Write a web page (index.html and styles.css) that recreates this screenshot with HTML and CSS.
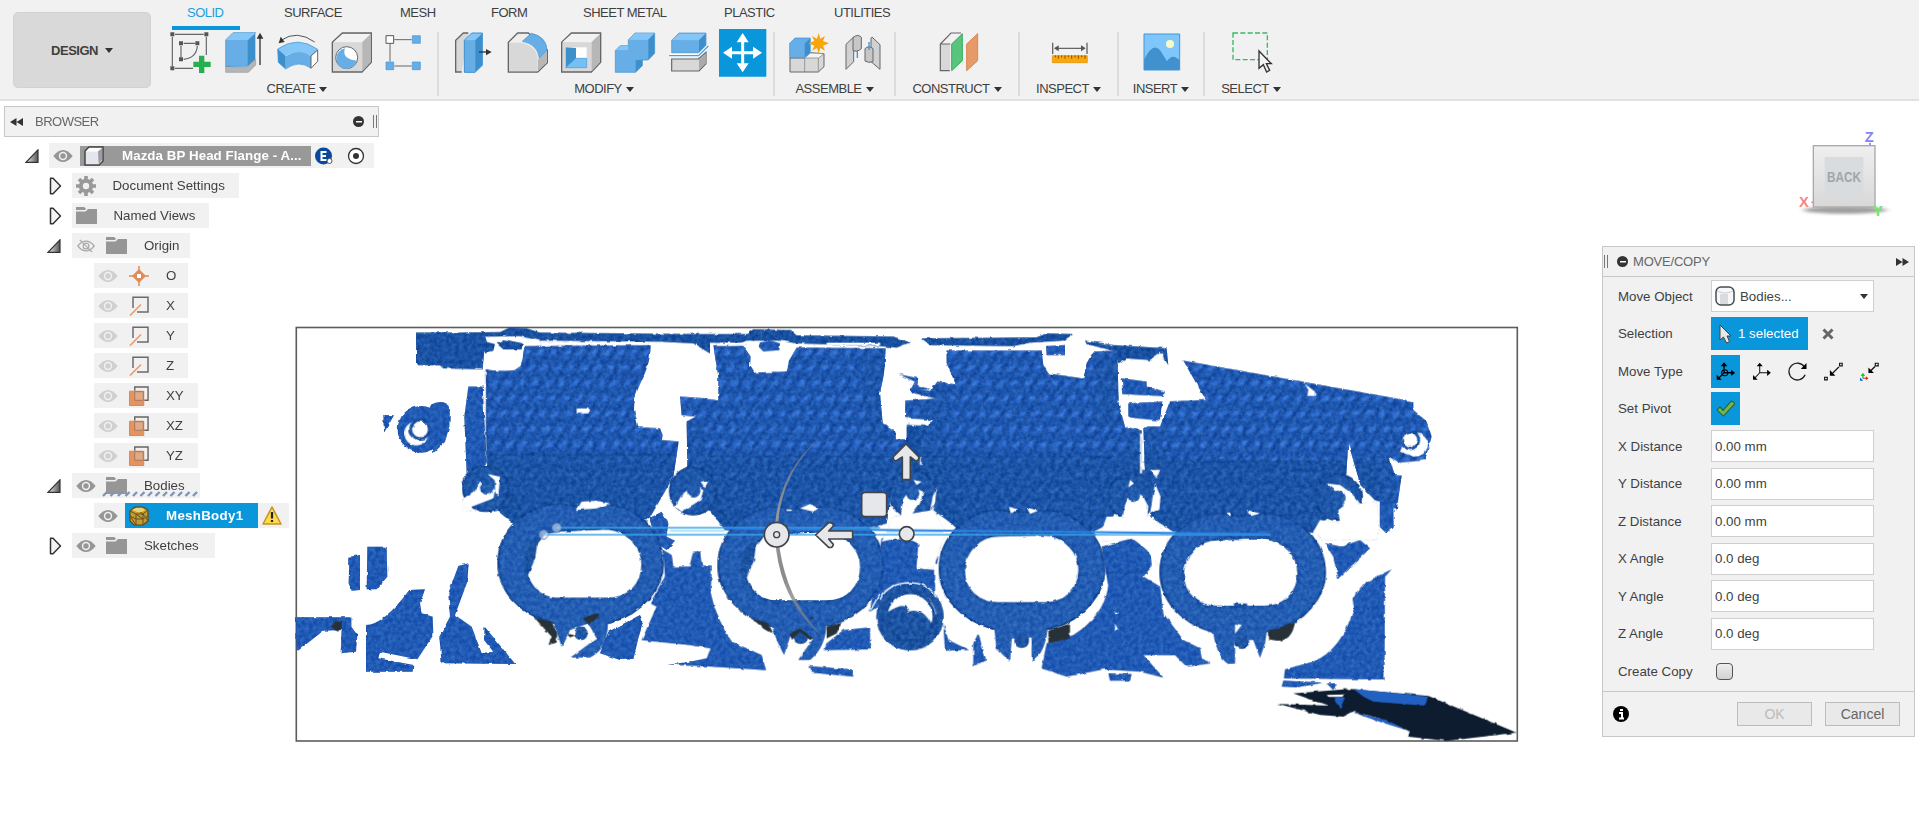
FILE: index.html
```html
<!DOCTYPE html>
<html lang="en">
<head>
<meta charset="utf-8">
<title>Mazda BP Head Flange</title>
<link rel="stylesheet" href="styles.css">
</head>
<body>
<svg class="defs" width="0" height="0">
  <defs>
    <linearGradient id="arrowFill" x1="0" x2="1"><stop offset="0" stop-color="#eee"/><stop offset="1" stop-color="#555"/></linearGradient>
    <symbol id="open" viewBox="0 0 14 14"><path d="M13 .8V13.300H1Z" fill="url(#arrowFill)" stroke="#333" stroke-width="1.200"/></symbol>
    <symbol id="closed" viewBox="0 0 13 18"><path d="M1.500 1.200H4L11.500 9 4 16.800H1.500Z" fill="#f4f4f4" stroke="#333" stroke-width="1.500" stroke-linejoin="round"/></symbol>
    <symbol id="eye" viewBox="0 0 20 14"><path d="M.3 7Q5 1 10 1t9.700 6Q15 13 10 13T.3 7Z" fill="currentColor"/><circle cx="10" cy="7" r="4.200" fill="#f1f1f1"/><circle cx="10" cy="7" r="2.700" fill="currentColor"/></symbol>
    <symbol id="eyeoff" viewBox="0 0 20 16"><path d="M.7 8Q5 2.500 10 2.500T19.300 8Q15 13.500 10 13.500T.7 8ZM3 1l14 14" fill="none" stroke="#aaa" stroke-width="1.400"/><circle cx="10" cy="8" r="3.300" fill="none" stroke="#aaa" stroke-width="1.400"/></symbol>
    <symbol id="folder" viewBox="0 0 21 17"><path d="M0 0H8L10 1.500 9 3H0ZM0 4.500H9.500L12 2H21V17H0Z" fill="#969696"/></symbol>
    <symbol id="axis" viewBox="0 0 20 20"><path d="M4 12V1.200H19V16H8" fill="none" stroke="#6b6b6b" stroke-width="1.500"/><path d="M1 19.500L12 8.500" stroke="#e9a071" stroke-width="1.700"/></symbol>
    <symbol id="plane" viewBox="0 0 21 21"><path d="M6 5V1H20V15H16" fill="none" stroke="#666" stroke-width="1.500"/><path d="M.5 5.500H15.500V20.500H.5Z" fill="#e4945f" stroke="#d98550"/><path d="M6 6H15V15H6Z" fill="#dfab87" stroke="#a87558"/></symbol>
  </defs>
</svg>

<svg class="viewport" width="1919" height="836" viewBox="0 0 1919 836">
  <defs>
    <filter id="scan" x="-2%" y="-3%" width="104%" height="106%" color-interpolation-filters="sRGB">
      <feTurbulence type="fractalNoise" baseFrequency=".05" numOctaves="2" seed="4" result="edge"/>
      <feDisplacementMap in="SourceGraphic" in2="edge" scale="9" xChannelSelector="R" yChannelSelector="G" result="rough"/>
      <feTurbulence type="fractalNoise" baseFrequency=".08" numOctaves="3" seed="9"/>
      <feColorMatrix values="0 0 0 0 .2  0 0 0 0 .29  0 0 0 0 .42  1.100 0 0 0 -.3"/>
      <feComposite in2="rough" operator="in" result="grain"/>
      <feBlend in="grain" in2="rough" mode="screen"/>
    </filter>
    <filter id="ragged" x="-2%" y="-3%" width="104%" height="106%">
      <feTurbulence type="fractalNoise" baseFrequency=".05" numOctaves="2" seed="4"/>
      <feDisplacementMap in="SourceGraphic" scale="9" xChannelSelector="R" yChannelSelector="G"/>
    </filter>
    <pattern id="weave" width="40" height="46" patternUnits="userSpaceOnUse" patternTransform="skewX(-32)">
      <path d="M0 0V46M40 0V46" stroke="#063079" stroke-width="11" opacity=".36"/>
      <path d="M0 4L40 24" stroke="#063079" stroke-width="6" opacity=".2"/>
      <ellipse cx="21" cy="36" rx="11" ry="11" fill="#3f80f0" opacity=".26"/>
      <ellipse cx="22" cy="34" rx="6" ry="7" fill="#4a8bfa" opacity=".28"/>
    </pattern>
    <linearGradient id="needle" x1="0" y1="0" x2="0" y2="1"><stop offset="0" stop-color="#888" stop-opacity=".4"/><stop offset=".4" stop-color="#999"/><stop offset=".7" stop-color="#8a8a8a"/><stop offset="1" stop-color="#888" stop-opacity=".4"/></linearGradient>
    <linearGradient id="cube" x1="0" y1="0" x2="0" y2="1"><stop offset="0" stop-color="#efefef"/><stop offset="1" stop-color="#d8d8d8"/></linearGradient>
    <filter id="soft" x="-20%" y="-100%" width="140%" height="300%"><feGaussianBlur stdDeviation="9 4"/></filter>
    <path id="flange" d="M-247 0C-247-90-170-176-60-176Q0-160 60-176C170-176 247-90 247 5C247 70 190 150 90 180H-90C-190 150-247 80-247 0Z"/>
    <path id="bore" d="M-172 5C-172-58-120-100-70-100L70-103C130-98 172-50 172 0C172 60 130 100 70 100H-70C-130 100-172 60-172 5Z"/>
    <path id="boreCut" d="M-172 32L-150-20-145-60-120-92-70-100L70-106C130-98 172-50 172 0C172 60 130 102 70 102H-85C-130 100-160 70-172 32Z"/>
    <path id="block1" d="M735 108L1112 106C1110 200 1062 220 1062 300L1075 352 1140 355 1148 375 1145 390 1196 395 1180 500 1108 625 1000 650 700 640 655 600 650 500 622 470 616 178Q660 186 705 180 728 170 730 130Z"/>
    <path id="block2" d="M100 108L190 108 212 140 210 165 225 188 320 185 328 150 350 113 617 115 612 190 600 250 608 340 645 362 648 388 680 388 686 322 675 320 676 272 770 266 690 246 690 235 750 243 770 215 828 224 800 160 800 122 1085 122 1090 165 1105 190 1210 206 1220 160 1240 125 1312 122 1316 280 1335 350 1385 362 1385 480 1395 480 1390 350 1440 350 1470 274 1578 270 1510 152 2130 262 2200 275 2200 300 2240 335 2255 380 2235 450 2160 458 2125 440 2145 495 2165 497 2150 600 2138 590 2140 650 2118 668 2100 650 2100 575 2085 570 2042 525 2005 400 1998 500 2045 580 1990 550 1970 600 1925 640 1900 665 1480 665 1410 620 1425 540 1320 570 1290 640 1240 665 830 655 770 590 690 610 720 540 665 560 655 600 630 575 620 640 560 655 135 660 90 600 10 610 60 550 -15 580 -30 540 -10 490 22 470 20 335 48 320 5 315 0 260 75 265 115 272 115 200Z"/>
    <clipPath id="inBlock1"><use href="#block1"/></clipPath>
    <clipPath id="inBlock2"><use href="#block2"/></clipPath>
  </defs>

  <rect x="296.300" y="327.500" width="1221" height="413.500" fill="#fff" stroke="#5c5c5c" stroke-width="1.600"/>

  <g transform="translate(280 310) scale(.33333)" fill="#144dac">
    <g filter="url(#scan)">
      <!-- first cylinder, left edge -->
      <path d="M408 68H612L622 100 612 130 608 178 490 175 480 166 408 165Z" fill="#0e459a"/>
      <path d="M540 68L660 66 690 52 740 55 780 68 1260 72 1400 72 1420 58 1530 60 1550 76 1840 80 1890 97 1850 113 1800 108 1550 100 1500 92 1400 92 1380 100 1290 98 1290 130 1240 100 1140 95 780 92 720 78 620 80Z" fill="#0c4295"/>
      <path d="M1925 85L2270 82 2300 70 2380 72 2350 92 2250 98 2200 108 1950 105ZM2415 92L2500 105 2660 115 2665 165 2640 125 2610 150 2540 145 2515 160 2500 122 2420 102ZM650 100L670 88 728 100 725 118 670 118ZM615 95L645 102 640 122 615 130Z" fill="#0c4295"/>
      <path d="M565 230H608L620 460 560 490 553 320Z"/>
      <use href="#block1"/><use href="#block1" fill="url(#weave)"/>
      <path d="M600 432H1200V660H600Z" fill="#0e4596" opacity=".65" clip-path="url(#inBlock1)"/>
      <path d="M1436 110L1440 98 1470 92 1500 100 1498 120 1450 124Z"/>
      <g transform="translate(1200 0)">
        <use href="#block2"/><use href="#block2" fill="url(#weave)"/>
        <g clip-path="url(#inBlock2)" fill="#0e4596">
          <path d="M60 440H1320L2090 455V670H60Z" opacity=".6"/>
          <path d="M720 120H800V660H720ZM540 120H617V400H560ZM20 340H75V500H20ZM1250 120H1312V350H1250ZM1338 350H1450V500H1338ZM1940 440H2140V660H1940Z" opacity=".4"/>
        </g>
        <path d="M655 192L715 205 712 225 750 238 690 242 705 215ZM1098 108L1155 105 1155 135 1100 135Z"/>
        <path d="M1325 205L1400 215 1400 230 1455 245 1450 258 1330 252ZM1345 280L1447 275 1440 332 1345 322Z"/>
        <path d="M680 345H722V480H680Z" fill="#0c4295"/>
      </g>

      <!-- webs and debris below the ports -->
      <path d="M310 315L342 316 312 368ZM450 285Q490 265 510 290L508 350 495 395 460 430Z"/>
      <circle cx="423" cy="358" r="70"/>
      <path d="M208 740L240 735 240 840 215 842 206 820ZM262 710L320 710 322 800 290 838 260 838Z"/>
      <path d="M48 922H214L214 950 232 975 228 1025 182 1030 185 960 130 962 50 1025Z"/>
      <path d="M388 840L435 838 420 880 425 910 458 920 460 975 412 1048 300 1025 295 1045 400 1065 398 1085H258V945Q310 945 388 840Z"/>
      <path d="M535 768L566 760 562 815 525 915 575 950 605 1030 640 1025 612 990 614 950 706 1062 485 1060 478 980 510 920 505 850Z"/>
      <path d="M1108 625L1145 605 1165 640 1160 680 1185 692 1160 720 1130 700ZM1080 915L1090 935 1075 985 1060 1048 1020 1050 960 1030 985 965ZM1160 1065L1300 1045 1290 1060Z"/>
      <g transform="translate(1200 0)">
        <path d="M-50 720L-25 735-20 770 28 770 40 725 60 725 66 770 95 770 92 850Q110 930 155 995L245 1035 258 1080 70 1068-10 1065 80 1045 92 1015 30 1005-115 990-70 890-90 880-45 800Z"/>
        <path d="M605 685L700 685 720 705 710 775 765 780 765 850 610 880 570 905ZM755 740L775 740 770 765Z"/>
        <path d="M440 1000L490 960 570 952 570 1018 430 1020ZM385 1068L515 1078 520 1100 395 1088ZM790 940L805 990 868 1020 795 1022ZM895 970L918 1050 880 1068 880 1000Z"/>
        <circle cx="690" cy="920" r="101" fill="#114798"/>
      </g>
      <g transform="translate(2400 0)">
        <path d="M-115 1075L-100 1000-20 975Q70 920 85 830L65 710 155 685 210 720 215 770 190 800 240 830 250 910 310 990 360 1015 365 1045 392 1060 320 1070 285 1035H190L250 1103 180 1085 70 1078-40 1100ZM85 1090L155 1092 150 1112 90 1112Z"/>
        <path d="M935 778L915 800 913 1108 612 1105 615 1078 700 1055Q785 1020 822 895L818 865 860 815ZM735 700L785 710 840 690 870 715 775 805 760 740ZM610 1112L730 1118 650 1132 605 1130ZM740 1120H770L760 1140Z"/>
      </g>

      <!-- bolt bosses -->
      <g fill="#124a9f" stroke="#0a3a88" stroke-width="6">
        <circle cx="617" cy="535" r="68"/><circle cx="1240" cy="543" r="70"/><circle cx="1898" cy="552" r="70"/><circle cx="2555" cy="560" r="70"/><circle cx="3175" cy="562" r="68"/>
      </g>
      <g fill="#fff">
        <path d="M550 565L580 545 600 515 645 540 640 565 575 590 575 605 545 600ZM622 492L660 500 655 560 645 545 645 512Z"/>
        <path d="M1185 590L1205 555 1240 525 1270 540 1262 570 1205 605ZM1262 515L1285 512 1275 535Z"/>
        <path d="M1860 640L1868 570 1895 530 1930 545 1920 580 1890 620ZM1900 510L1925 515 1910 525Z"/>
        <path d="M2525 640L2535 585 2555 535 2590 560 2605 590 2600 640ZM2550 510L2562 520 2545 532ZM2610 480L2640 480 2630 505ZM2625 520L2642 560 2638 600 2610 610Z"/>
        <path d="M3175 600L3195 585 3170 545 3140 520 3180 525 3215 550 3240 580 3290 575 3300 650 3290 690 3130 690 3100 665 3120 630 3180 640Z"/>
        <path d="M1840 620L1960 600 2000 670 1985 700 1960 775 1910 770 1915 700 1870 680 1805 695ZM2480 620L2620 620 2665 680 2640 770 2600 720 2560 685 2470 695 2465 660Z"/>
      </g>
      <path d="M3300 575L3330 580 3350 600 3340 590 3340 650 3318 668 3300 650Z"/>
      <g fill="#164fa5"><circle cx="620" cy="534" r="20"/><circle cx="1241" cy="543" r="20"/><circle cx="1898" cy="550" r="20"/><circle cx="2560" cy="556" r="20"/><circle cx="3175" cy="564" r="22"/></g>
      <path d="M650 600L700 560 730 610 700 640ZM1290 600L1330 640 1370 640 1300 560ZM1960 600L2040 660 2050 630 1980 560ZM2615 610L2680 660 2720 640 2640 600Z" fill="#0d4598"/>

      <!-- intake flanges -->
      <g fill="#1851aa" stroke="#0a3c8c" stroke-width="6">
        <use href="#flange" x="902" y="758"/><use href="#flange" x="1562" y="766"/><use href="#flange" x="2226" y="776"/><use href="#flange" x="2888" y="786"/>
      </g>
      <g fill="#1851aa">
        <path d="M815 920L845 1010 870 960 925 940 950 985 872 1042H930Q985 1020 985 920Z"/>
        <path d="M1470 930L1490 990 1512 1035 1530 980 1600 985 1555 1050H1590Q1640 1010 1640 930Z"/>
        <path d="M2140 930L2150 1015 2190 1055 2195 985 2255 985 2255 1055Q2300 1030 2305 930Z"/>
        <path d="M2795 930Q2805 1040 2845 1062L2865 1060 2865 990 2920 990 2940 1043 2955 1000 2965 930Z"/>
      </g>
      <g fill="none" stroke="#0c3f90" stroke-width="16" opacity=".3">
        <use href="#bore" x="914" y="763"/><use href="#bore" x="1570" y="774"/><use href="#bore" x="2225" y="778"/><use href="#bore" x="2882" y="789"/>
      </g>
      <g fill="#104697"><path d="M738 800Q715 690 800 664L820 720 760 830ZM1388 820Q1365 700 1440 690L1460 740 1410 850ZM903 990"/></g>
      <g fill="#fff" stroke="#0e4496" stroke-width="4">
        <use href="#boreCut" x="914" y="763"/><use href="#boreCut" x="1570" y="771"/><use href="#bore" x="2225" y="778"/><use href="#bore" x="2882" y="789"/>
      </g>
      <g fill="#104697">
        <path d="M2860 880L2900 880 2905 892 2865 892Z"/>
        <circle cx="903" cy="970" r="20"/><circle cx="1562" cy="980" r="22"/><circle cx="2225" cy="992" r="22"/><circle cx="2886" cy="996" r="21"/>
      </g>

      <!-- gaps in the scan -->
      <g fill="#fff">
        <path d="M890 295H926V310H890ZM890 600L905 575 950 572 990 580 950 595ZM613 180H617V330H613ZM780 97L1105 95V104H780ZM1320 98L1400 98V105H1320ZM1640 98H1800V106H1640Z"/>
        <path d="M1560 595L1590 582 1615 595 1600 605ZM1520 598H1535V603H1520ZM2190 590L2210 598 2195 610ZM2240 592L2275 602 2250 612ZM2840 608L2855 608 2850 620ZM2900 600L2940 610 2915 618ZM1880 325L1955 330 1945 347 1885 345Z"/>
        <path d="M3075 222L3105 245 3105 258 3082 258 3085 240ZM2865 940L2885 945 2865 972ZM2505 905H2515V910H2505ZM2505 940L2515 960 2505 962ZM2580 370H2586V490H2580ZM1920 440H1925V465H1920ZM1970 530L1965 580 1950 605 1958 560Z"/>
        <path d="M2620 140L2650 125 2655 150Z"/>
        <circle cx="409" cy="370" r="36"/><path d="M3385 365Q3440 370 3445 400 3440 440 3400 440L3360 425Z"/>
        <path d="M1825 905Q1820 850 1895 845 1960 855 1968 910L1955 945Q1930 890 1885 905 1880 870 1825 905Z"/>
      </g>
      <circle cx="420" cy="358" r="28" fill="#fff" stroke="#104697" stroke-width="9"/>
      <circle cx="3390" cy="390" r="26" fill="#fff" stroke="#104697" stroke-width="9"/>
      <circle cx="1890" cy="920" r="72" fill="none" stroke="#0c3f8e" stroke-width="9"/>
      <path d="M1800 870Q1820 820 1890 818 1950 820 1970 865M1772 900L1800 850" fill="none" stroke="#fff" stroke-width="4"/>
      <path d="M622 178L618 450Q650 480 680 510L695 570 740 620M1280 500Q1315 540 1315 590L1350 640M625 434H1180M1290 440H2510M2590 455H3200M2480 788H2590" fill="none" stroke="#0a3b88" stroke-width="5" opacity=".65"/>
    </g>

    <!-- reverse faces -->
    <g filter="url(#ragged)">
      <g fill="#263237">
        <path d="M762 922L815 935 832 970 830 998 805 1005 815 980ZM910 925L935 912 958 910 950 930 925 940ZM860 972L890 975 870 982ZM148 945L185 930 185 955 170 965Z"/>
        <path d="M1415 925L1465 940 1480 970 1455 960ZM1640 950L1685 938 1670 970 1640 985ZM1530 970L1560 955 1600 985 1590 990 1560 965 1535 990ZM1585 925L1600 920 1598 930Z"/>
        <path d="M2305 962L2370 940 2370 985 2305 1000ZM2967 962L3045 938Q3035 995 2990 992L2967 988Z"/>
      </g>
      <path d="M3040 1150L3210 1137 3445 1158 3710 1268 3500 1293 3385 1280 3385 1262 3300 1225 3220 1205 3190 1220 3120 1215 2995 1182 3145 1187Z" fill="#091b2d"/>
      <path d="M3220 1137L3445 1160 3435 1187 3280 1175 3250 1160ZM3158 1163L3195 1163 3180 1196ZM3205 1203L3320 1230 3385 1262 3300 1236Z" fill="#2160c2"/>
      <path d="M3140 1155L3195 1153 3190 1161 3145 1161Z" fill="#fff"/>
    </g>

    <!-- sketch lines through the ports -->
    <path d="M830 653H1800M790 674H2970" stroke="#3aa6e8" stroke-width="5" fill="none"/>
    <path d="M1170 662H1335M1820 665H1990M2480 670H2640" stroke="#9fdaf2" stroke-width="7" opacity=".75"/>
    <path d="M1340 655L2960 672" stroke="#2b83e3" stroke-width="6"/>
    <g fill="#dfe7f5" fill-opacity=".55" stroke="#7a93bb" stroke-width="3"><circle cx="830" cy="653" r="13"/><circle cx="791" cy="674" r="13"/></g>

    <!-- move manipulator -->
    <g transform="translate(1200 0)" stroke="#414549" stroke-width="5" stroke-linejoin="round" fill="#e5e7ea">
      <path d="M435 372Q300 470 284 650Q286 870 435 985Q302 860 293 650Q304 480 435 372Z" fill="url(#needle)" stroke="none"/>
      <path d="M678 402L716 440Q718 452 707 453L691 441V509H667V441L648 453Q637 450 641 439Z"/>
      <path d="M407 675L446 638Q460 637 460 648L446 663H518V687H446L460 703Q458 715 446 712Z"/>
      <rect x="545" y="547" width="75" height="73" rx="10"/>
      <circle cx="290" cy="674" r="37"/><circle cx="290" cy="674" r="9" stroke-width="4"/><circle cx="680" cy="672" r="22"/>
    </g>
  </g>

  <!-- view cube -->
  <g transform="translate(1590 110) scale(.33333)" font-family="Liberation Sans">
    <ellipse cx="765" cy="300" rx="125" ry="11" fill="#777" opacity=".7" filter="url(#soft)"/>
    <rect x="670" y="107" width="185" height="184" fill="url(#cube)" stroke="#a9a9a9" stroke-width="4"/>
    <rect x="704" y="141" width="116" height="116" fill="#d9dcdf"/>
    <text class="cube-face" x="762" y="216" text-anchor="middle" textLength="102" lengthAdjust="spacingAndGlyphs">BACK</text>
    <text class="cube-axis" x="824" y="96" fill="#8585f5">Z</text><text class="cube-axis" x="627" y="291" fill="#f58585">X</text><text class="cube-axis" x="849" y="317" fill="#69ec69">Y</text>
    <path d="M840 98v7" stroke="#8585f5" stroke-width="5"/><path d="M664 277h6" stroke="#f58585" stroke-width="5"/>
  </g>
</svg>

<header class="toolbar">
  <button class="design">DESIGN <i class="caret"></i></button>
  <div class="ribbon">
    <nav class="tabs"><span class="active">SOLID</span><span>SURFACE</span><span>MESH</span><span>FORM</span><span>SHEET METAL</span><span>PLASTIC</span><span>UTILITIES</span></nav>
    <div class="groups">
      <section><div class="icons">
        <svg viewBox="488 87 162 144"><path d="M516 110V198M618 110V165M524 103H610M524 205H578M542 137V172M550 130H584M591 138Q588 174 550 178" fill="none" stroke="#666" stroke-width="3.500"/><path d="M510 97h12v12h-12zM612 97h12v12h-12zM510 199h12v12h-12zM536 124h12v12h-12zM585 124h12v12h-12zM536 172h12v12h-12z" fill="#555"/><path d="M596 167h16v18h19v16h-19v18h-16v-18h-17v-16h17Z" fill="#27ae4f"/></svg>
        <svg viewBox="650 87 162 144"><path d="M676 199L742 203 766 178V195L744 217H676Z" fill="#b5b5b5" stroke="#999" stroke-width="2"/><path d="M676 120L698 98H766L743 121V199H676Z" fill="#66aee5" stroke="#3c90d0" stroke-width="2"/><path d="M677 120L698 99H765L743 120Z" fill="#84c6f7"/><path d="M743 121L765 100V178L743 199Z" fill="#3d8fcc"/><path d="M779 195V108" stroke="#333" stroke-width="4"/><path d="M769 116L779 98 789 116Z" fill="#333"/></svg>
        <svg viewBox="812 87 162 144"><path d="M832 147Q892 105 952 148L931 168Q890 145 855 169V207L834 187Z" fill="#84c6f7"/><path d="M832 147L856 169V207L834 187Z" fill="#3d8fcc"/><path d="M856 169Q895 144 931 168V204Q895 179 856 206Z" fill="#66aee5"/><path d="M832 147Q892 105 952 148L931 168V204Q895 179 856 207L834 187Z" fill="none" stroke="#4095d3" stroke-width="2"/><path d="M932 168L952 150V184L932 205Z" fill="#fff" stroke="#666" stroke-width="3"/><path d="M943 126Q890 88 842 121" fill="none" stroke="#555" stroke-width="3"/><path d="M835 130L841 110 853 126Z" fill="#333"/></svg>
        <svg viewBox="974 87 162 144"><path d="M996 127L1026 99H1113V187L1085 216H996Z" fill="#d8d8d8" stroke="#666" stroke-width="4"/><path d="M1000 126L1027 102H1110L1085 127Z" fill="#f2f2f2"/><path d="M1086 127L1111 102V186L1086 214Z" fill="#b7b7b7"/><circle cx="1039" cy="173" r="33" fill="#fff" stroke="#666" stroke-width="3"/><path d="M1034 145Q1023 177 1069 182A31 31 0 1 1 1034 145Z" fill="#66aee5"/></svg>
        <svg viewBox="1136 87 162 144"><path d="M1182 119H1234M1169 132V184M1182 198H1234" stroke="#666" stroke-width="3"/><path d="M1157 107h23v23h-23z" fill="#fff" stroke="#555" stroke-width="3"/><path d="M1236 107h24v23h-24zM1157 186h23v23h-23zM1236 186h24v23h-24z" fill="#66aee5" stroke="#4095d3" stroke-width="2"/></svg>
      </div><h2>CREATE <i class="caret"></i></h2></section>
      <section><div class="icons">
        <svg viewBox="42 87 162 144"><path d="M92 216H74V121L97 99H112" fill="#d8d8d8" stroke="#666" stroke-width="4"/><path d="M100 121L122 99H154V196L132 217H100Z" fill="#66aee5" stroke="#3c90d0" stroke-width="3"/><path d="M102 120L122 101H152L132 121Z" fill="#84c6f7"/><path d="M133 121L153 101V195L133 215Z" fill="#3d8fcc"/><path d="M144 156H170" stroke="#333" stroke-width="4"/><path d="M165 147L182 156 165 166Z" fill="#333"/></svg>
        <svg viewBox="204 87 162 144"><path d="M232 216V127L260 99H292L349 150V188L320 216Z" fill="#eee" stroke="#666" stroke-width="4"/><path d="M234 128H272Q320 140 320 181V214H234Z" fill="#d8d8d8"/><path d="M321 178L347 153V187L321 213Z" fill="#b7b7b7"/><path d="M274 124L301 100Q347 110 348 151L325 174Q319 132 274 124Z" fill="#66aee5" stroke="#3c90d0" stroke-width="2"/></svg>
        <svg viewBox="366 87 162 144"><path d="M392 127L421 99H509V187L481 216H392Z" fill="#d8d8d8" stroke="#666" stroke-width="4"/><path d="M395 126L422 102H507L481 127Z" fill="#f2f2f2"/><path d="M482 127L507 102V186L482 214Z" fill="#b7b7b7"/><path d="M404 142H467V203H404Z" fill="#fff"/><path d="M404 142L435 144V175L404 203Z" fill="#3d8fcc"/><path d="M404 203L435 175H467V203Z" fill="#75bff5" stroke="#4095d3" stroke-width="2"/></svg>
        <svg viewBox="528 87 162 144"><path d="M553 151L568 137H592V119L612 99H671V160L652 180H634V197L614 217H553Z" fill="#66aee5" stroke="#3c90d0" stroke-width="2"/><path d="M592 119L612 100H669L650 120ZM554 150L568 138H591V150Z" fill="#84c6f7"/><path d="M652 119L670 101V160L652 178ZM614 181L634 179V196L614 215Z" fill="#3d8fcc"/></svg>
        <svg viewBox="690 87 162 144"><path d="M722 177V213H804L825 191V157L802 177Z" fill="#d8d8d8" stroke="#666" stroke-width="3.500"/><path d="M804 178L824 160V190L804 211Z" fill="#aaa"/><path d="M722 121L744 99H825V136L803 158H722Z" fill="#66aee5" stroke="#3c90d0" stroke-width="2"/><path d="M723 120L744 101H823L804 121Z" fill="#84c6f7"/><path d="M804 121L824 101V136L804 157Z" fill="#3d8fcc"/><path d="M714 167H803L832 138" fill="none" stroke="#fff" stroke-width="8"/><path d="M714 167H803L832 138" fill="none" stroke="#4b9fe0" stroke-width="4"/></svg>
        <svg viewBox="852 87 162 144"><path d="M864 87H1006V230H864Z" fill="#0a96da"/><path d="M887 158H982M935 110V207" stroke="#fff" stroke-width="9"/><path d="M876 158L903 140V176ZM993 158L966 140V176ZM935 99L917 127H953ZM935 217L917 190H953Z" fill="#fff"/></svg>
      </div><h2 class="modify">MODIFY <i class="caret"></i></h2></section>
      <section><div class="icons">
        <svg viewBox="1052 87 162 144"><path d="M1079 174V216H1164L1181 200V161L1140 158 1120 174Z" fill="#d8d8d8" stroke="#666" stroke-width="3"/><path d="M1125 174L1140 161H1180L1164 175Z" fill="#f4f4f4"/><path d="M1123 174H1164V215M1123 174V216M1164 175L1180 162" fill="none" stroke="#777" stroke-width="2"/><path d="M1078 130L1094 114H1140V158L1123 173H1078Z" fill="#66aee5" stroke="#3c90d0" stroke-width="2"/><path d="M1123 130L1139 116V157L1123 172Z" fill="#3d8fcc"/><path d="M1165 99L1170 116 1184 108 1178 123 1196 130 1178 137 1184 152 1170 144 1165 161 1160 144 1145 152 1152 137 1134 130 1152 123 1145 108 1160 116Z" fill="#f9a409"/></svg>
        <svg viewBox="1214 87 162 144"><path d="M1247 133L1270 111V185L1247 208ZM1325 111L1349 134V208L1322 185V115Z" fill="#d1d1d1" stroke="#666" stroke-width="3"/><path d="M1268 151V113Q1282 100 1293 112V146Q1280 158 1268 151ZM1304 183V146Q1315 135 1328 146V185Q1315 190 1304 183Z" fill="#c7c7c7" stroke="#666" stroke-width="3"/><path d="M1281 152V174M1316 126V150" stroke="#3994dc" stroke-width="4"/></svg>
      </div><h2>ASSEMBLE <i class="caret"></i></h2></section>
      <section><div class="icons">
        <svg viewBox="150 87 162 144"><path d="M178 132H207V213H178Z" fill="#d8d8d8"/><path d="M206 212H178V132L210 99H240M179 132H208" fill="none" stroke="#666" stroke-width="3.500"/><path d="M212 132L244 101V182L212 212Z" fill="#58c47c" stroke="#38ac62" stroke-width="3"/><path d="M257 132L290 101V182L257 212Z" fill="#e79a69" stroke="#d98652" stroke-width="3"/></svg>
      </div><h2>CONSTRUCT <i class="caret"></i></h2></section>
      <section><div class="icons">
        <svg viewBox="484 87 162 144"><path d="M516 128V162M619 128V162M525 145H610" stroke="#666" stroke-width="4"/><path d="M520 145L534 136V154ZM615 145L601 136V154Z" fill="#555"/><path d="M515 167H620V188H515Z" fill="#f9a70a" stroke="#df8e00" stroke-width="2"/><path d="M524 166v6m9-6v10m10-10v6m10-6v10m10-10v6m10-6v10m10-10v6m10-6v10m10-10v6m10-6v10" stroke="#694300" stroke-width="2.500"/></svg>
      </div><h2>INSPECT <i class="caret"></i></h2></section>
      <section><div class="icons">
        <svg viewBox="762 87 162 144"><path d="M789 102H896V210H789Z" fill="#7ec6fb"/><path d="M789 180Q820 115 845 163L858 184Q874 158 896 181V210H789Z" fill="#4091cd"/><circle cx="867" cy="132" r="12" fill="#fbfac7"/><path d="M789 102H896V210H789Z" fill="none" stroke="#4095d3" stroke-width="3"/></svg>
      </div><h2>INSERT <i class="caret"></i></h2></section>
      <section><div class="icons">
        <svg viewBox="1032 87 162 144"><path d="M1056 99H1159V179H1056Z" fill="none" stroke="#38b765" stroke-width="4" stroke-dasharray="15 7"/><path d="M1134 153V205L1147 194 1157 216 1166 211 1156 191H1171Z" fill="#f4f4f4" stroke="#333" stroke-width="4"/></svg>
      </div><h2>SELECT <i class="caret"></i></h2></section>
    </div>
  </div>
</header>

<main class="workspace">
  <aside class="browser">
    <div class="browser-head"><svg width="13" height="8" viewBox="0 0 13 8"><path d="M6.500 0V8L0 4ZM13 0V8L6.500 4Z" fill="#333"/></svg><span>BROWSER</span><i class="minus"></i><i class="grip"></i></div>
    <ul class="tree">
      <li class="root"><svg class="arrow"><use href="#open"/></svg><div class="item"><svg class="eye"><use href="#eye"/></svg><div class="doc"><svg width="22" height="20" viewBox="0 0 22 20"><path d="M2 5L6 1H20V15L16 19H2Z" fill="#fff" stroke="#444" stroke-width="1.500"/><path d="M3 5.500H15V18H3Z" fill="#e4e6ee"/><path d="M15 5.500L19 2V14L15.500 18Z" fill="#9a9ca6"/></svg><b>Mazda BP Head Flange - A...</b></div><svg class="badge" viewBox="0 0 18 18"><circle cx="8.500" cy="9" r="8.500" fill="#07499c"/><path d="M11.500 5H6.500V13H11.500M6.500 9H11" fill="none" stroke="#fff" stroke-width="2"/><circle cx="14.500" cy="14" r="2.500" fill="#fff" stroke="#555"/></svg><svg class="radio" viewBox="0 0 18 18"><circle cx="9" cy="9" r="7.500" fill="#fff" stroke="#333" stroke-width="1.300"/><circle cx="9" cy="9" r="3" fill="#333"/></svg></div></li>
      <li><svg class="arrow tall"><use href="#closed"/></svg><div class="item w167"><svg width="20" height="20" viewBox="-10 -10 20 20"><circle r="5.200" fill="none" stroke="#999" stroke-width="4"/><path d="M0-10V-6M0 10V6M-10 0H-6M10 0H6M-7-7L-4.500-4.500M7 7L4.500 4.500M-7 7L-4.500 4.500M7-7L4.500-4.500" stroke="#999" stroke-width="3.600"/></svg><span>Document Settings</span></div></li>
      <li><svg class="arrow tall"><use href="#closed"/></svg><div class="item w137"><svg class="folder"><use href="#folder"/></svg><span>Named Views</span></div></li>
      <li><svg class="arrow"><use href="#open"/></svg><div class="item w118"><svg class="eye"><use href="#eyeoff"/></svg><svg class="folder second"><use href="#folder"/></svg><span>Origin</span></div></li>
      <li class="leaf"><div class="item w94"><svg class="eye dim"><use href="#eye"/></svg><svg class="geo" viewBox="0 0 20 20"><path d="M10 0V20M0 10H20" stroke="#df8c58" stroke-width="1.500"/><path d="M10 3L17 10 10 17 3 10Z" fill="#df8c58"/><path d="M8 8h4v4h-4z" fill="#fff"/></svg><span>O</span></div></li>
      <li class="leaf"><div class="item w94"><svg class="eye dim"><use href="#eye"/></svg><svg class="geo"><use href="#axis"/></svg><span>X</span></div></li>
      <li class="leaf"><div class="item w94"><svg class="eye dim"><use href="#eye"/></svg><svg class="geo"><use href="#axis"/></svg><span>Y</span></div></li>
      <li class="leaf"><div class="item w94"><svg class="eye dim"><use href="#eye"/></svg><svg class="geo"><use href="#axis"/></svg><span>Z</span></div></li>
      <li class="leaf"><div class="item w104"><svg class="eye dim"><use href="#eye"/></svg><svg class="geo"><use href="#plane"/></svg><span>XY</span></div></li>
      <li class="leaf"><div class="item w104"><svg class="eye dim"><use href="#eye"/></svg><svg class="geo"><use href="#plane"/></svg><span>XZ</span></div></li>
      <li class="leaf"><div class="item w104"><svg class="eye dim"><use href="#eye"/></svg><svg class="geo"><use href="#plane"/></svg><span>YZ</span></div></li>
      <li><svg class="arrow"><use href="#open"/></svg><div class="item w128 bodies"><svg class="eye"><use href="#eye"/></svg><svg class="folder second"><use href="#folder"/></svg><span>Bodies</span><svg class="hatch" width="97" height="6" viewBox="0 0 97 6"><path d="M1 5l4-4m3.500 4l4-4m3.500 4l4-4m3.500 4l4-4m3.500 4l4-4m3.500 4l4-4m3.500 4l4-4m3.500 4l4-4m3.500 4l4-4m3.500 4l4-4m3.500 4l4-4m3.500 4l4-4m3.500 4l4-4" stroke="#7f95b8" stroke-width="2.400"/></svg></div></li>
      <li class="leaf"><div class="item mesh"><svg class="eye"><use href="#eye"/></svg><div class="chosen"><svg width="20" height="20" viewBox="0 0 20 20"><path d="M1 5L6 1H14L19 4V15L14 19H5L1 15Z" fill="#c49c35" stroke="#64470c" stroke-width="1.200"/><path d="M1 5L7 8H14L19 4M7 8V19M14 8V19M1 10L7 13H14L19 10M6 1L14 8M7 8L14 13M1 10L7 19M14 8L19 15" fill="none" stroke="#68501a"/><path d="M3 4L7 2H13L16 4 13 6H8Z" fill="#ead27b"/></svg><b>MeshBody1</b></div><svg width="20" height="19" viewBox="0 0 20 19"><path d="M10 1L19 18H1Z" fill="#fddb4a" stroke="#c59428" stroke-width="1.600" stroke-linejoin="round"/><path d="M10 6V12.500M10 14V16" stroke="#222" stroke-width="2.200"/></svg></div></li>
      <li><svg class="arrow tall"><use href="#closed"/></svg><div class="item w143"><svg class="eye"><use href="#eye"/></svg><svg class="folder second"><use href="#folder"/></svg><span>Sketches</span></div></li>
    </ul>
  </aside>

  <section class="dialog">
    <div class="dialog-head"><i class="grip"></i><i class="minus"></i><span>MOVE/COPY</span><svg width="13" height="8" viewBox="0 0 13 8"><path d="M0 0V8L6.500 4ZM6.500 0V8L13 4Z" fill="#333"/></svg></div>
    <div class="fields">
      <label>Move Object</label><div class="select"><svg width="20" height="20" viewBox="0 0 20 20"><rect x="1" y="1" width="18" height="18" rx="5" fill="#f8f8fa" stroke="#444c55" stroke-width="1.500"/><path d="M5 8H13V18H5Z" fill="#d8dbe0"/><path d="M2 5Q10 9 18 5" fill="none" stroke="#ccc"/></svg><span>Bodies...</span><i class="caret"></i></div>
      <label>Selection</label><div class="line"><div class="selected"><svg width="13" height="20" viewBox="0 0 13 20"><path d="M1 1V16L4.500 13 7.500 19 10.500 17.500 8 12H12Z" fill="#e8e8e8" stroke="#444"/></svg>1 selected</div><svg class="clear" width="12" height="12" viewBox="0 0 12 12"><path d="M1.500 1.500L10.500 10.500M10.500 1.500L1.500 10.500" stroke="#666" stroke-width="3"/></svg></div>
      <label>Move Type</label><div class="line types">
        <span class="on"><svg viewBox="375 755 58 58"><path d="M399 787V762M399 787H424M399 787L383 803" stroke="#000" stroke-width="4" fill="none"/><circle cx="401" cy="787" r="9" fill="none" stroke="#000" stroke-width="3"/><path d="M389 768L399 756 409 768ZM420 778L432 787 420 797ZM377 793V808H392Z"/></svg></span>
        <svg viewBox="484 755 58 58"><path d="M507 787V764M507 787H532M507 787L492 803" stroke="#111" stroke-width="3" fill="none"/><path d="M498 768L507 757 516 768ZM529 778L540 787 529 797ZM487 794V808H501Z"/></svg>
        <svg viewBox="593 755 58 58"><path d="M644 793A25 25 0 1 1 642 770" fill="none" stroke="#222" stroke-width="4"/><path d="M648 758V776H631Z"/></svg>
        <svg viewBox="702 753 60 60"><path d="M748 768L729 787" stroke="#111" stroke-width="4"/><path d="M720 778V795H737Z"/><path d="M750 757h8v8h-8zM704 800h8v8h-8z" fill="#fff" stroke="#111" stroke-width="3.500"/></svg>
        <svg viewBox="811 753 60 60"><path d="M857 767L844 780" stroke="#111" stroke-width="4"/><path d="M837 770V787H854Z"/><path d="M858 757h9v8h-9z" fill="#fff" stroke="#111" stroke-width="3.500"/><path d="M820 803V794" stroke="#1c2" stroke-width="4"/><path d="M813 796L820 786 827 796Z" fill="#1c2"/><path d="M820 803H831" stroke="#e22" stroke-width="3"/><path d="M829 797L837 803 829 809Z" fill="#e22"/><path d="M811 801V811H821Z" fill="#06c"/></svg>
      </div>
      <label>Set Pivot</label><div class="line"><span class="on"><svg viewBox="375 0 58 50"><path d="M378 28L387 20 396 30 421 2 432 9 397 47Z" fill="#73b455" stroke="#285f2b" stroke-width="3"/></svg></span></div>
      <label>X Distance</label><div class="input">0.00 mm</div>
      <label>Y Distance</label><div class="input">0.00 mm</div>
      <label>Z Distance</label><div class="input">0.00 mm</div>
      <label>X Angle</label><div class="input">0.0 deg</div>
      <label>Y Angle</label><div class="input">0.0 deg</div>
      <label>Z Angle</label><div class="input">0.0 deg</div>
      <label>Create Copy</label><div class="line"><i class="check"></i></div>
    </div>
    <footer><svg width="16" height="16" viewBox="0 0 16 16"><circle cx="8" cy="8" r="8"/><path d="M6 7H9V12M6 12.500H11" fill="none" stroke="#fff" stroke-width="2"/><path d="M7 3H10V5H7Z" fill="#fff"/></svg><button class="ok">OK</button><button>Cancel</button></footer>
  </section>
</main>
</body>
</html>
```
FILE: styles.css
```css
* { box-sizing: border-box; }
body { margin: 0; width: 1919px; height: 836px; overflow: hidden; background: #fff; font: 13.3px "Liberation Sans", sans-serif; color: #3f3f3f; position: relative; }
button { font-family: inherit; color: inherit; padding: 0; }
svg { flex: none; display: block; }
.defs { position: absolute; }
.viewport { position: absolute; left: 0; top: 0; }
.cube-face { font-size: 46px; font-weight: bold; fill: #a1a5aa; }
.cube-axis { font-size: 44px; font-weight: bold; }
.caret { display: inline-block; border: 4px solid transparent; border-top: 5.5px solid #333; border-bottom: 0; }

.toolbar { position: relative; height: 101px; background: #f1f1f1; border-bottom: 2px solid #e1e1e1; display: flex; padding-left: 13px; }
.design { width: 138px; height: 76px; margin: 12px 6px 0 0; border: 1px solid #d2d2d2; border-radius: 5px; background: #d9d9d9; font-size: 13px; letter-spacing: -.5px; font-weight: bold; display: flex; align-items: center; justify-content: center; gap: 7px; }
.ribbon { display: flex; flex-direction: column; }
.tabs { height: 29px; padding: 5px 0 0 30px; display: grid; grid-template-columns: 97px 116px 91px 92px 141px 110px 100px; font-size: 13px; letter-spacing: -.5px; line-height: 16px; }
.active { color: #1d9fdd; width: 68px; height: 25px; margin-left: -15px; padding-left: 15px; border-bottom: 4px solid #0a96da; }
.groups { display: grid; grid-template-columns: 282px 336px 121px 124px 99px 86px 94px; }
.groups section { height: 67px; background: linear-gradient(#dcdcdc, #dcdcdc) right 3px / 2px 64px no-repeat; }
.groups section:last-child { background: none; }
.icons { display: flex; justify-content: center; height: 48px; padding-right: 1px; }
.icons svg { width: 54px; height: 48px; }
.groups h2 { margin: 4px 0 0; padding-right: 2px; font-size: 13px; font-weight: normal; letter-spacing: -.5px; line-height: 16px; display: flex; gap: 4px; align-items: center; justify-content: center; }
.groups h2.modify { padding-right: 6px; }

.workspace { position: relative; display: flex; justify-content: space-between; align-items: flex-start; padding: 5px 4px 0; }
.browser { width: 375px; }
.browser-head { height: 31px; background: #f1f1f1; border: 1.5px solid #c7c7c7; display: flex; align-items: center; padding-left: 5px; font-size: 13px; letter-spacing: -.5px; color: #666; }
.browser-head span { margin-left: 12px; flex: 1; }
.minus { width: 11px; height: 11px; border-radius: 50%; background: linear-gradient(#fff, #fff) center / 6px 1.5px no-repeat #333; }
.grip { width: 4px; height: 13px; border: solid #777; border-width: 0 1px; }
.browser-head .grip { margin: 0 1px 0 9px; }
.tree { list-style: none; margin: 6.4px 0 0; padding: 0; display: flex; flex-direction: column; gap: 5px; }
.tree li { height: 25px; display: flex; align-items: center; padding-left: 43px; }
.tree .leaf { padding-left: 90px; }
.tree .root { padding-left: 21px; }
.arrow { width: 14px; height: 14px; margin-right: 11px; }
.arrow.tall { width: 13px; height: 18px; margin: 0 10px 0 2px; }
.root .arrow { margin-right: 10px; }
.item { height: 25px; background: #f1f1f1; display: flex; align-items: center; padding-left: 3.5px; white-space: nowrap; position: relative; }
.root .item { width: 325px; }
.eye { width: 20px; height: 14px; color: #969696; }
.dim { color: #d0d0d0; }
.doc { height: 20px; width: 231px; margin-left: 7.5px; padding-left: 3px; background: #999; color: #fff; display: flex; align-items: center; }
.doc b { margin-left: 17px; letter-spacing: .08px; }
.badge { width: 18px; height: 18px; margin-left: 4px; }
.radio { width: 18px; height: 18px; margin-left: 14px; }
.folder { width: 21px; height: 17px; }
.second { margin-left: 10.5px; }
.item > span { margin-left: 17px; }
.geo { width: 20px; height: 20px; margin-left: 11.5px; }
.w94 { width: 94px; } .w104 { width: 104px; } .w118 { width: 118px; } .w128 { width: 128px; } .w137 { width: 137px; } .w143 { width: 143px; } .w167 { width: 167px; }
.hatch { position: absolute; left: 30px; bottom: 1px; }
.mesh { width: 195px; }
.chosen { width: 133px; height: 25px; margin: 0 4px 0 7.5px; padding-left: 4px; background: #0a96da; color: #fff; display: flex; align-items: center; }
.chosen b { margin-left: 17px; letter-spacing: .3px; }

.dialog { width: 313px; height: 491px; margin: 140px 0 0; background: #f1f1f1; border: 1.5px solid #c7c7c7; }
.dialog-head { height: 30px; border-bottom: 1.5px solid #c7c7c7; display: flex; align-items: center; padding: 0 5px 0 1px; font-size: 13px; letter-spacing: -.2px; color: #666; }
.dialog-head .minus { margin: 0 5px 0 9px; }
.dialog-head span { flex: 1; }
.fields { height: 415px; border-bottom: 1.5px solid #c7c7c7; padding: .5px 0 0 15px; display: grid; grid-template-columns: 93px 163px; grid-auto-rows: 37.5px; align-items: center; }
.input, .select { height: 32px; background: #fff; border: 1.5px solid #cfcfcf; padding-left: 3px; display: flex; align-items: center; }
.select span { margin-left: 5px; flex: 1; }
.select .caret { margin-right: 5px; }
.line { display: flex; align-items: center; }
.selected { width: 97px; height: 33px; background: #0a96da; color: #fff; display: flex; align-items: center; gap: 6px; padding-left: 8px; white-space: nowrap; }
.clear { margin-left: 13.5px; }
.on { flex: none; width: 29px; height: 33px; background: #0a96da; display: grid; place-items: center; }
.types { gap: 16.700px; }
.types .on { margin-right: -5px; }
.types svg, .on svg { width: 19.500px; height: 19.500px; }
.check { width: 17px; height: 17px; margin-left: 5px; border: 1.5px solid #555; border-radius: 4px; background: linear-gradient(#eee, #d2d2d2); }
footer { height: 44px; display: flex; align-items: center; padding: 0 14px 0 10px; gap: 13px; }
footer svg { margin-right: auto; }
footer button { width: 75px; height: 24px; font-size: 14px; color: #666; background: #e9e9e9; border: 1.5px solid #bcbcbc; }
footer .ok { color: #bbb; }
```
